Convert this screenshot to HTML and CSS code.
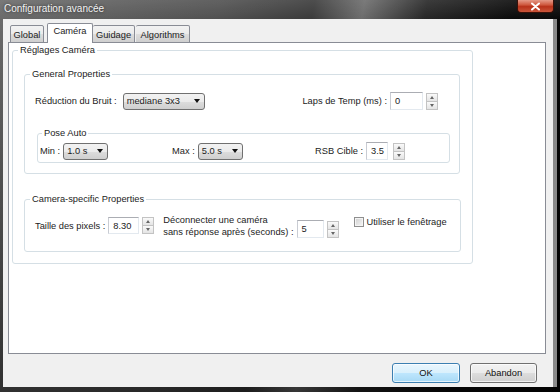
FILE: index.html
```html
<!DOCTYPE html>
<html lang="fr">
<head>
  <meta charset="UTF-8">
  <title>Configuration avancée</title>
  <link rel="stylesheet" href="styles.css">
</head>
<body>
  <div class="window">
    <div class="titlebar">
      <span class="title">Configuration avancée</span>
      <span class="close">
        <svg width="11" height="9" viewBox="0 0 11 9"><path d="M2 1.5l7 6M9 1.5l-7 6" stroke="#fff" stroke-width="2" stroke-linecap="round"/></svg>
      </span>
    </div>

    <div class="client">
      <div class="tabs">
        <div class="tab tab-global">Global</div>
        <div class="tab tab-camera active">Caméra</div>
        <div class="tab tab-guidage">Guidage</div>
        <div class="tab tab-algo">Algorithms</div>
      </div>

      <div class="panel">
        <fieldset class="group group-main">
          <legend>Réglages Caméra</legend>

          <fieldset class="group group-general">
            <legend>General Properties</legend>
            <div class="row-top">
              <div class="field">
                <span>Réduction du Bruit :</span>
                <span class="combo combo-wide">mediane 3x3</span>
              </div>
              <div class="field">
                <span>Laps de Temp (ms) :</span>
                <span class="input input-laps">0</span>
                <span class="spin-btns"><span class="spin-btn up"></span><span class="spin-btn down"></span></span>
              </div>
            </div>

            <fieldset class="group group-pose">
              <legend>Pose Auto</legend>
              <div class="pose-row">
                <div class="field">
                  <span>Min :</span>
                  <span class="combo combo-small">1.0 s</span>
                </div>
                <div class="field">
                  <span>Max :</span>
                  <span class="combo combo-small">5.0 s</span>
                </div>
                <div class="field">
                  <span>RSB Cible :</span>
                  <span class="input input-rsb">3.5</span>
                  <span class="spin-btns spin-far"><span class="spin-btn up"></span><span class="spin-btn down"></span></span>
                </div>
              </div>
            </fieldset>
          </fieldset>

          <fieldset class="group group-camera">
            <legend>Camera-specific Properties</legend>
            <div class="cam-row">
              <div class="field field-pixels">
                <span>Taille des pixels :</span>
                <span class="input input-pixels">8.30</span>
                <span class="spin-btns"><span class="spin-btn up"></span><span class="spin-btn down"></span></span>
              </div>
              <div class="disconnect-label">Déconnecter une caméra<br>sans réponse après (seconds) :</div>
              <div class="field field-disconnect">
                <span class="input input-secs">5</span>
                <span class="spin-btns"><span class="spin-btn up"></span><span class="spin-btn down"></span></span>
              </div>
              <label class="check">
                <span class="checkbox"></span>
                <span>Utiliser le fenêtrage</span>
              </label>
            </div>
          </fieldset>
        </fieldset>
      </div>

      <div class="footer">
        <button class="btn btn-default">OK</button>
        <button class="btn">Abandon</button>
      </div>
    </div>
  </div>
</body>
</html>
```

FILE: styles.css
```css
* {
  box-sizing: border-box;
}
body {
  margin: 0;
  background: #050505;
  font-family: "Liberation Sans", Arial, sans-serif;
  font-size: 9.3px;
  color: #1c1c1c;
}
.window {
  width: 560px;
  height: 392px;
  display: flex;
  flex-direction: column;
  background:
    linear-gradient(to bottom, rgba(255,255,255,0.1) 0, rgba(0,0,0,0) 20px, rgba(0,0,0,0.5) 100%),
    linear-gradient(100deg, #6a6a6a 0%, #505050 35%, #3a3a3a 50%, #6c6c6c 58%, #262626 68%, #0a0a0a 82%, #040404 100%);
}

/* title bar */
.titlebar {
  height: 19px;
  display: flex;
  align-items: flex-start;
  flex-shrink: 0;
}
.title {
  color: #f2f2f2;
  font-size: 10px;
  margin: 3px 0 0 4px;
  text-shadow: 0 0 3px rgba(0,0,0,0.6);
}
.close {
  margin-left: auto;
  margin-right: 6px;
  width: 37px;
  height: 13px;
  display: flex;
  align-items: center;
  justify-content: center;
  border: 1px solid #3a1008;
  border-top: none;
  border-radius: 0 0 4px 4px;
  background: linear-gradient(#e59a88 0, #cf5a40 40%, #b8321a 55%, #c9553a 100%);
}

/* client area */
.client {
  flex: 1;
  display: flex;
  flex-direction: column;
  margin: 0 7px 5px 3px;
  padding: 4px 7px 0 5px;
  background: #f0f0f0;
  box-shadow: 4px 0 0 #8a8a8a;
}
.tabs {
  display: flex;
  align-items: flex-end;
  height: 20px;
  margin-bottom: -1px;
  padding-left: 2px;
  position: relative;
  z-index: 1;
}
.tab {
  height: 18px;
  display: flex;
  align-items: center;
  justify-content: center;
  padding-top: 1px;
  border: 1px solid #898c95;
  border-radius: 2px 2px 0 0;
  background: linear-gradient(#f2f2f2 0, #ebebeb 50%, #dddddd 51%, #cfcfcf 100%);
}
.tab + .tab {
  border-left: none;
}
.tab-global { width: 34px; }
.tab-camera { width: 46px; margin-left: 3px; }
.tab-guidage { width: 42px; }
.tab-algo { width: 54px; margin-left: 1px; }
.tab.active {
  height: 20px;
  border-left: 1px solid #898c95;
  border-bottom: none;
  background: #fff;
  align-items: flex-start;
  padding-top: 2px;
}

.panel {
  flex: 1;
  background: #fff;
  border: 1px solid #898c95;
  padding: 1px 0 0 3px;
}

/* group boxes */
.group {
  margin: 0;
  min-width: 0;
  border: 1px solid #d5dfe5;
  border-radius: 3px;
}
.group > legend {
  padding: 0 2px;
  line-height: 12px;
}
.group-main {
  width: 461px;
  padding: 0 12px 11px 5px;
}
.group-general {
  width: 436px;
  margin: 12px 0 0 6px;
  padding: 0 0 10px 5px;
}
.group-pose {
  width: 413px;
  margin: 17px 0 0 7px;
  padding: 0 0 2px 2px;
}
.group-pose > legend {
  margin-left: 2px;
}
.group-camera {
  width: 437px;
  margin: 19px 0 0 6px;
  padding: 0 0 13px 5px;
}

.row-top {
  display: flex;
  justify-content: space-between;
  align-items: center;
  height: 18px;
  margin-top: 12px;
  padding: 0 21px 0 5px;
}
.pose-row {
  display: grid;
  grid-template-columns: 132px 143px 1fr;
  align-items: center;
  height: 18px;
  margin-top: 3px;
}
.cam-row {
  display: flex;
  align-items: flex-start;
  margin-top: 9px;
  padding-left: 5px;
}

.field {
  display: flex;
  align-items: center;
  gap: 3px;
}

/* controls */
.combo {
  display: flex;
  align-items: center;
  justify-content: space-between;
  height: 17px;
  padding: 0 4px 0 3px;
  border: 1px solid #707070;
  border-radius: 3px;
  background: linear-gradient(#f2f2f2 0, #ebebeb 50%, #dddddd 51%, #cfcfcf 100%);
}
.combo::after {
  content: "";
  border-left: 3.5px solid transparent;
  border-right: 3.5px solid transparent;
  border-top: 4px solid #111;
}
.combo-wide { width: 82px; margin-left: 3px; }
.combo-small { width: 45px; }

.input {
  display: flex;
  align-items: center;
  height: 18px;
  padding-left: 4px;
  background: #fff;
  border: 1px solid #e3e9ef;
  border-top-color: #abadb3;
  border-left-color: #c9ccd3;
}
.input-laps { width: 33px; }
.input-rsb { width: 22px; }
.input-pixels { width: 31px; height: 17px; }
.input-secs { width: 27px; }

.spin-btns {
  display: flex;
  flex-direction: column;
  width: 12px;
  height: 17px;
}
.spin-far {
  margin-left: 2px;
}
.spin-btn {
  flex: 1;
  display: flex;
  align-items: center;
  justify-content: center;
  border: 1px solid #c3c3c3;
  background: linear-gradient(#fafafa, #e4e4e4);
}
.spin-btn + .spin-btn {
  border-top: none;
}
.spin-btn.up::after {
  content: "";
  border-left: 2.5px solid transparent;
  border-right: 2.5px solid transparent;
  border-bottom: 3px solid #666;
}
.spin-btn.down::after {
  content: "";
  border-left: 2.5px solid transparent;
  border-right: 2.5px solid transparent;
  border-top: 3px solid #666;
}

.field-pixels {
  margin-top: 3px;
}
.disconnect-label {
  margin-left: 9px;
  line-height: 12px;
}
.field-disconnect {
  margin: 6px 0 0 3px;
}
.check {
  display: flex;
  align-items: center;
  gap: 3px;
  margin: 3px 0 0 15px;
}
.checkbox {
  width: 10px;
  height: 10px;
  border: 1px solid #8f8f8f;
  background: linear-gradient(135deg, #cfcfcf, #f6f6f6);
  box-shadow: inset 0 0 0 1px #f4f4f4;
}

/* footer buttons */
.footer {
  height: 33px;
  flex-shrink: 0;
  display: flex;
  justify-content: flex-end;
  align-items: flex-start;
  gap: 10px;
  padding: 9px 9px 0 0;
}
.btn {
  width: 67px;
  height: 20px;
  padding: 0;
  font: inherit;
  color: #111;
  border: 1px solid #707070;
  border-radius: 3px;
  background: linear-gradient(#f2f2f2 0, #ebebeb 50%, #dddddd 51%, #cfcfcf 100%);
  box-shadow: inset 0 0 0 1px rgba(255,255,255,0.7);
}
.btn-default {
  width: 68px;
  border-color: #3c7fb1;
  background: linear-gradient(#eaf6fd 0, #d9f0fc 50%, #bee6fd 51%, #a7d9f5 100%);
}
```
